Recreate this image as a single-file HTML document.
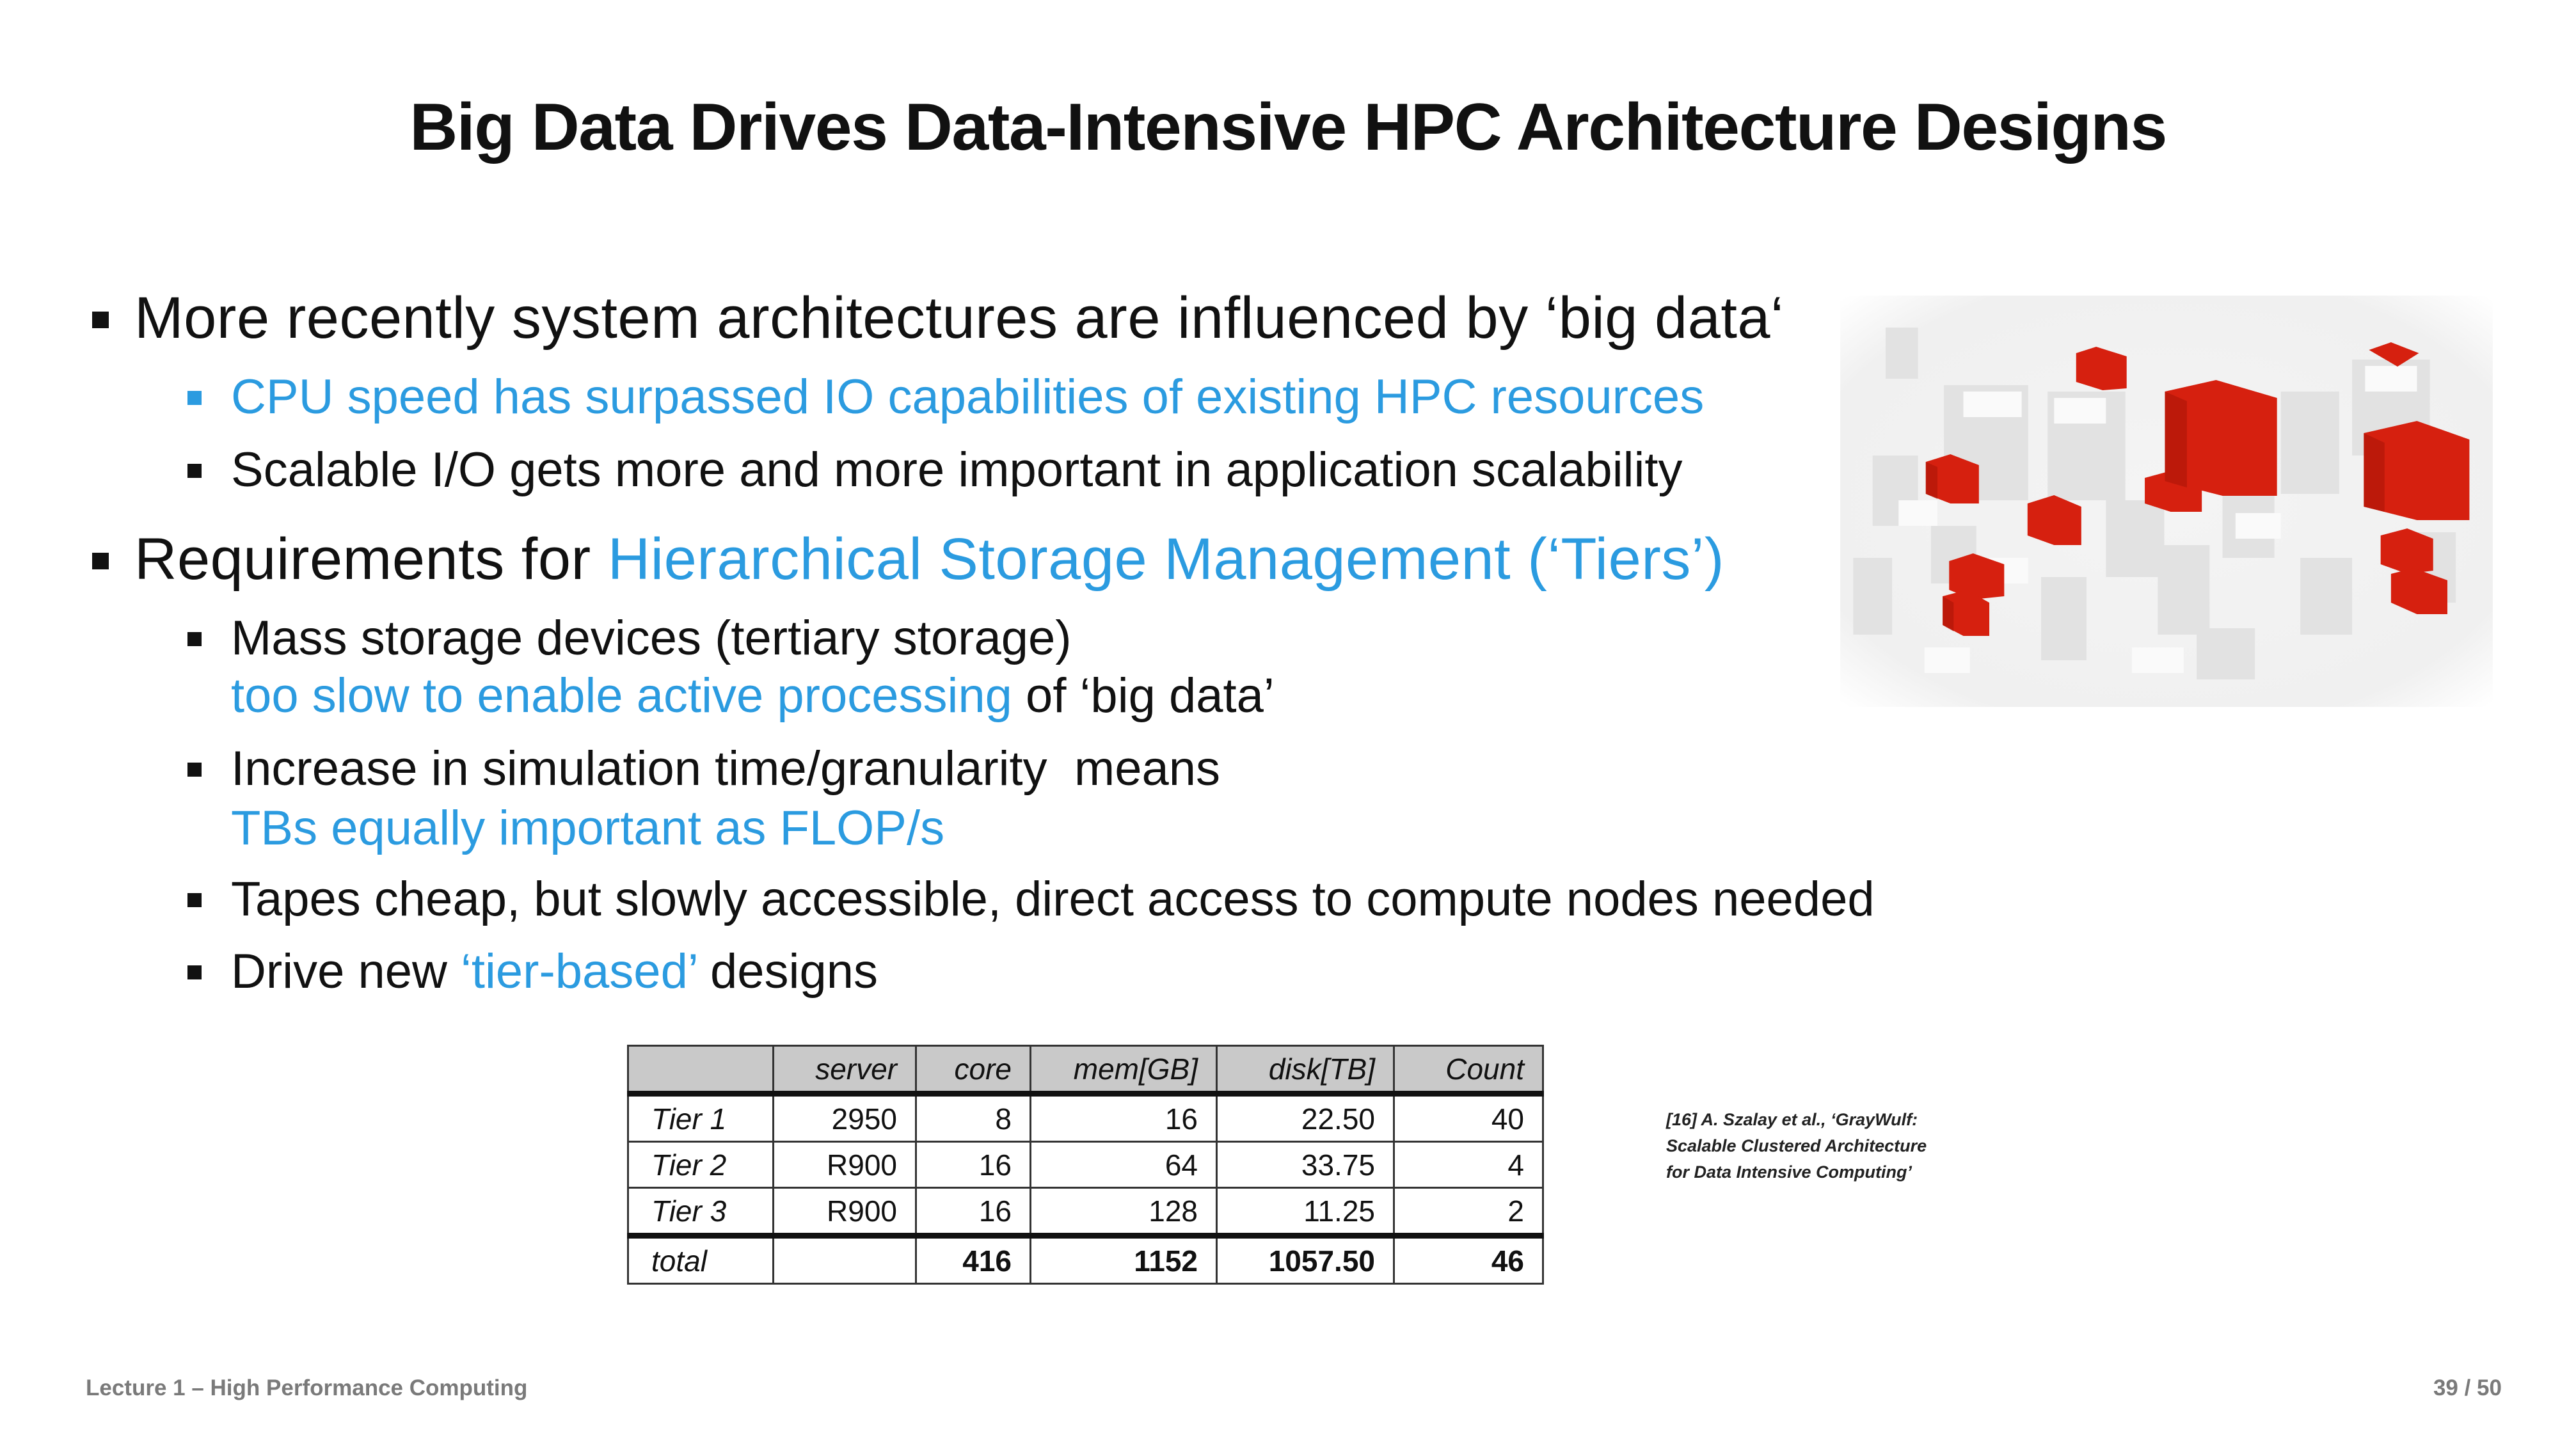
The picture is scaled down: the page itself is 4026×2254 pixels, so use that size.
<!DOCTYPE html>
<html><head><meta charset="utf-8"><style>
html,body{margin:0;padding:0;background:#fff;}
body{width:4026px;height:2254px;position:relative;overflow:hidden;font-family:"Liberation Sans",sans-serif;color:#111;}
.t{position:absolute;white-space:nowrap;}
.title{left:0;width:4026px;text-align:center;top:140px;font-size:104px;font-weight:bold;letter-spacing:-1.5px;}
.l1{font-size:92px;left:210px;letter-spacing:0.5px;}
.l2{font-size:76px;left:361px;letter-spacing:0px;}
.b{color:#2b9be0;}
.sq1{position:absolute;width:26px;height:26px;background:#111;left:144px;}
.sq2{position:absolute;width:22px;height:22px;background:#111;left:293px;}
table{position:absolute;left:980px;top:1633px;border-collapse:collapse;font-size:46px;font-family:"Liberation Sans",sans-serif;}
td{border:3px solid #333;height:69px;padding:0 28px;text-align:right;}
tr.h td{background:#c9c9c9;font-style:italic;border-bottom:9px solid #111;}
td.f{text-align:left;font-style:italic;padding-left:35px;}
tr.tot td{border-top:9px solid #111;font-weight:bold;}
tr.tot td.f{font-weight:normal;}
.cite{left:2604px;top:1730px;font-size:27px;font-weight:bold;font-style:italic;line-height:41px;color:#222;}
.foot{font-size:35px;font-weight:bold;color:#7a7a7a;top:2150px;}
</style></head><body>
<div class="t title">Big Data Drives Data-Intensive HPC Architecture Designs</div>

<div class="sq1" style="top:487px"></div>
<div class="t l1" style="top:445px">More recently system architectures are influenced by ‘big data‘</div>
<div class="sq2" style="top:611px;background:#2b9be0"></div>
<div class="t l2 b" style="top:577px">CPU speed has surpassed IO capabilities of existing HPC resources</div>
<div class="sq2" style="top:725px"></div>
<div class="t l2" style="top:691px">Scalable I/O gets more and more important in application scalability</div>

<div class="sq1" style="top:864px"></div>
<div class="t l1" style="top:822px">Requirements for <span class="b">Hierarchical Storage Management (‘Tiers’)</span></div>
<div class="sq2" style="top:988px"></div>
<div class="t l2" style="top:954px">Mass storage devices (tertiary storage)</div>
<div class="t l2" style="top:1044px"><span class="b">too slow to enable active processing</span> of ‘big data’</div>
<div class="sq2" style="top:1192px"></div>
<div class="t l2" style="top:1158px">Increase in simulation time/granularity &nbsp;means</div>
<div class="t l2 b" style="top:1251px">TBs equally important as FLOP/s</div>
<div class="sq2" style="top:1396px"></div>
<div class="t l2" style="top:1362px">Tapes cheap, but slowly accessible, direct access to compute nodes needed</div>
<div class="sq2" style="top:1509px"></div>
<div class="t l2" style="top:1475px">Drive new <span class="b">‘tier-based’</span> designs</div>

<svg style="position:absolute;left:2866px;top:452px" width="1040" height="663" viewBox="0 0 1027 663" preserveAspectRatio="none">
<defs><radialGradient id="g" cx="50%" cy="50%" r="70%"><stop offset="0" stop-color="#f4f4f4"/><stop offset="0.8" stop-color="#f0f0f0"/><stop offset="1" stop-color="#fff"/></radialGradient></defs>
<rect x="10" y="10" width="1007" height="643" fill="url(#g)"/>
<g fill="#e2e2e2">
<rect x="80" y="60" width="50" height="80"/><rect x="170" y="150" width="130" height="180"/><rect x="330" y="160" width="120" height="170"/>
<rect x="60" y="260" width="70" height="110"/><rect x="420" y="330" width="90" height="120"/><rect x="600" y="270" width="80" height="150"/>
<rect x="690" y="160" width="90" height="160"/><rect x="800" y="110" width="120" height="150"/><rect x="30" y="420" width="60" height="120"/>
<rect x="320" y="450" width="70" height="130"/><rect x="500" y="400" width="80" height="140"/><rect x="720" y="420" width="80" height="120"/>
<rect x="150" y="370" width="70" height="90"/><rect x="880" y="380" width="80" height="110"/><rect x="560" y="530" width="90" height="80"/>
</g>
<g fill="#fafafa">
<rect x="200" y="160" width="90" height="40"/><rect x="340" y="170" width="80" height="40"/><rect x="820" y="120" width="80" height="40"/>
<rect x="140" y="560" width="70" height="40"/><rect x="460" y="560" width="80" height="40"/><rect x="100" y="330" width="60" height="40"/>
<rect x="620" y="350" width="70" height="40"/><rect x="240" y="420" width="60" height="40"/>
</g>
<g fill="#d6200f">
<polygon points="374,100 405,90 452,105 452,155 415,158 374,145"/>
<polygon points="511,160 590,142 684,170 684,323 600,323 511,300"/>
<polygon points="818,225 900,206 981,235 981,361 900,361 818,340"/>
<polygon points="826,95 860,83 903,100 870,121"/>
<polygon points="142,270 180,258 224,275 224,335 180,335 142,320"/>
<polygon points="299,335 340,322 382,340 382,400 340,400 299,385"/>
<polygon points="480,295 520,284 568,300 568,348 520,348 480,335"/>
<polygon points="178,425 215,413 263,430 263,480 215,485 178,470"/>
<polygon points="168,480 205,470 240,490 240,542 200,542 168,525"/>
<polygon points="844,385 885,374 925,390 925,440 885,445 844,430"/>
<polygon points="860,445 895,436 947,455 947,508 900,508 860,490"/>
</g>
<g fill="#a81408" opacity="0.55">
<polygon points="511,160 545,175 545,310 511,300"/><polygon points="818,225 850,240 850,348 818,340"/>
<polygon points="142,270 160,278 160,328 142,320"/><polygon points="168,480 185,490 185,535 168,525"/>
</g>
</svg>

<table>
<tr class="h"><td style="width:168px"></td><td style="width:164px">server</td><td style="width:120px">core</td><td style="width:232px">mem[GB]</td><td style="width:218px">disk[TB]</td><td style="width:174px">Count</td></tr>
<tr><td class="f">Tier 1</td><td>2950</td><td>8</td><td>16</td><td>22.50</td><td>40</td></tr>
<tr><td class="f">Tier 2</td><td>R900</td><td>16</td><td>64</td><td>33.75</td><td>4</td></tr>
<tr><td class="f">Tier 3</td><td>R900</td><td>16</td><td>128</td><td>11.25</td><td>2</td></tr>
<tr class="tot"><td class="f">total</td><td></td><td>416</td><td>1152</td><td>1057.50</td><td>46</td></tr>
</table>

<div class="t cite">[16] A. Szalay et al., ‘GrayWulf:<br>Scalable Clustered Architecture<br>for Data Intensive Computing’</div>

<div class="t foot" style="left:134px">Lecture 1 – High Performance Computing</div>
<div class="t foot" style="right:116px">39 / 50</div>
</body></html>
